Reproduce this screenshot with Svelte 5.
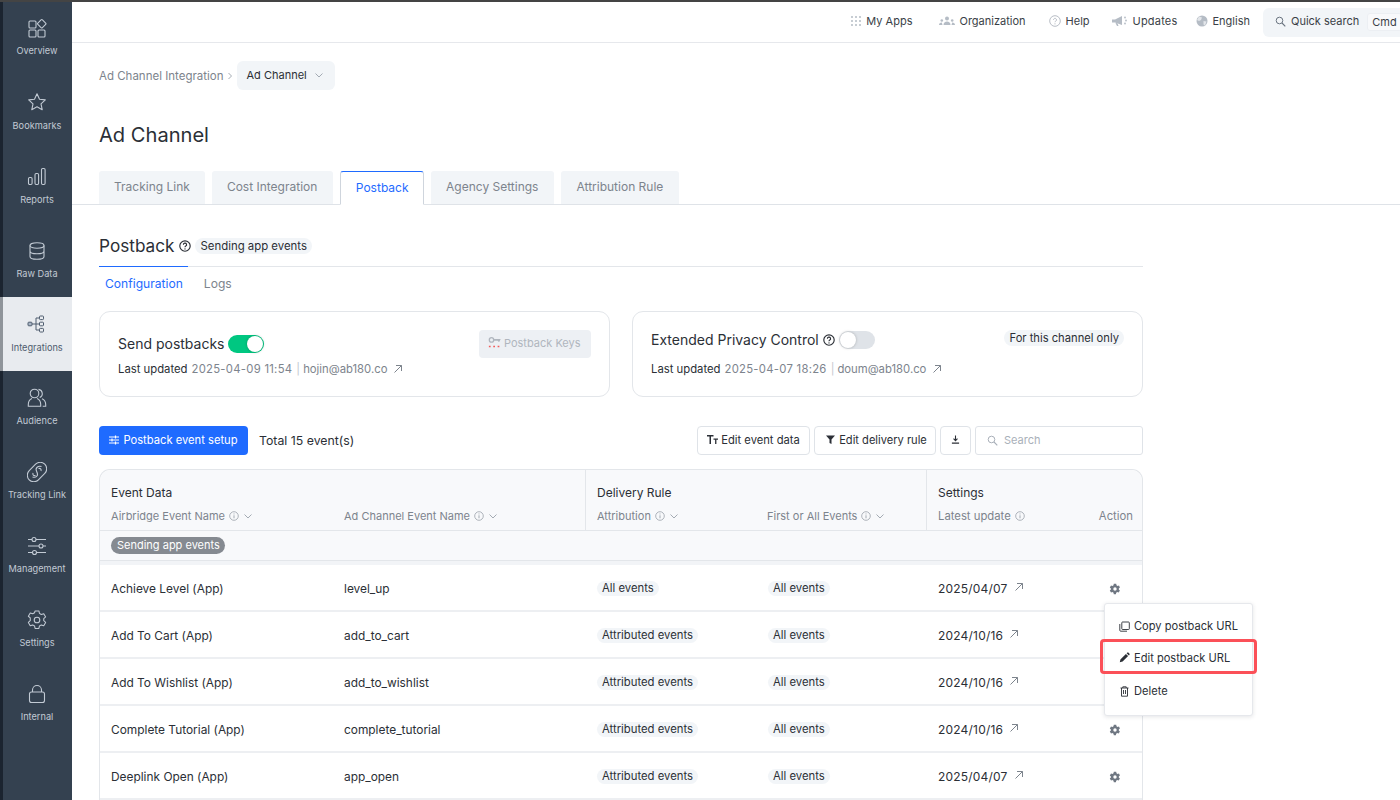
<script>
  const S = 'fill="none" stroke="currentColor" stroke-width="1.1"';
  const nav = [
    { label: 'Overview', svg: `<g ${S}><rect x="2" y="3" width="7" height="7" rx="1"/><rect x="2" y="12" width="7" height="7" rx="1"/><rect x="11" y="12" width="7" height="7" rx="1"/><rect x="11.500" y="2.500" width="6.500" height="6.500" rx="1" transform="rotate(45 14.750 5.750)"/></g>` },
    { label: 'Bookmarks', svg: `<path ${S} stroke-linejoin="round" d="M10 1.800l2.500 5.400 5.800.7-4.300 4 1.200 5.800L10 14.800l-5.200 2.900L6 11.900l-4.300-4 5.800-.7z"/>` },
    { label: 'Reports', svg: `<g ${S}><rect x="1.500" y="10.500" width="3.600" height="7" rx="1.200"/><rect x="8" y="6.500" width="3.600" height="11" rx="1.200"/><rect x="14.500" y="1.500" width="3.600" height="16" rx="1.200"/></g>` },
    { label: 'Raw Data', svg: `<g ${S}><ellipse cx="10" cy="4.500" rx="7" ry="2.700"/><path d="M3 4.500v11c0 1.600 3.100 2.800 7 2.800s7-1.200 7-2.800v-11M3 10c0 1.600 3.100 2.800 7 2.800s7-1.200 7-2.800"/></g>` },
    { label: 'Integrations', active: true, svg: `<g fill="none" stroke="#4e5c6e" stroke-width="1"><rect x="1" y="8.200" width="4" height="3.600" rx=".8" fill="#a9b6c6"/><path d="M5 10h4M9 4v12M9 4h3M9 10h3M9 16h3"/><rect x="12.500" y="2" width="4" height="3.600" rx=".8"/><rect x="12.500" y="8.200" width="4" height="3.600" rx=".8"/><rect x="12.500" y="14.400" width="4" height="3.600" rx=".8"/></g>` },
    { label: 'Audience', svg: `<g ${S}><circle cx="7.500" cy="5.500" r="4.300"/><path d="M5 10.600c-2 .8-3.700 3-3.700 6v1.700h12.400v-1.700c0-3-1.700-5.200-3.700-6"/><path d="M11.500 1.400a4.300 4.300 0 0 1 1.200 8.200M15 10.800c2 .8 3.700 3 3.700 5.800v1.700h-3"/></g>` },
    { label: 'Tracking Link', svg: `<g ${S}><rect x="-1" y="3.500" width="22" height="13" rx="6.500" transform="rotate(-45 10 10)"/><path d="M14.500 4.500C11 3.500 8 6 9.500 9c1 2 1.800 3.500.5 5-1 1.200-2.700 1.600-4.500 1"/><path d="M11.500 6.500c2-.5 3 .8 2.500 2.500M8.500 13.500c-2 .5-3-.8-2.500-2.500"/></g>` },
    { label: 'Management', svg: `<g ${S}><path d="M1 3.500h4M9 3.500h10M1 10h11M16 10h3M1 16.500h4.500M9.500 16.500H19"/><circle cx="7" cy="3.500" r="2"/><circle cx="14" cy="10" r="2"/><circle cx="7.500" cy="16.500" r="2"/></g>` },
    { label: 'Settings', svg: `<g ${S} stroke-linejoin="round"><path d="M8 1.500h4l.6 2.600 1.900 1.100 2.600-.8 2 3.400-2 1.800v2.200l2 1.800-2 3.400-2.600-.8-1.900 1.100-.6 2.600H8l-.6-2.600-1.900-1.100-2.600.8-2-3.400 2-1.800V8.900l-2-1.800 2-3.400 2.600.8 1.900-1.100z" transform="translate(.5 -.5) scale(.95)"/><circle cx="10" cy="10" r="2.800"/></g>` },
    { label: 'Internal', svg: `<g ${S}><rect x="2.500" y="8" width="15" height="10.500" rx="2"/><path d="M5.500 8V6a4.500 4.500 0 0 1 9 0v2"/></g>` },
  ];
  const tabs = ['Tracking Link', 'Cost Integration', 'Postback', 'Agency Settings', 'Attribution Rule'];
  const rows = [
    ['Achieve Level (App)', 'level_up', 'All events', 'All events', '2025/04/07', true],
    ['Add To Cart (App)', 'add_to_cart', 'Attributed events', 'All events', '2024/10/16', false],
    ['Add To Wishlist (App)', 'add_to_wishlist', 'Attributed events', 'All events', '2024/10/16', false],
    ['Complete Tutorial (App)', 'complete_tutorial', 'Attributed events', 'All events', '2024/10/16', true],
    ['Deeplink Open (App)', 'app_open', 'Attributed events', 'All events', '2025/04/07', true],
  ];
</script>

{#snippet help(size = 12)}
  <svg width={size} height={size} viewBox="0 0 12 12" class="help"><circle cx="6" cy="6" r="5.200" fill="none" stroke="currentColor" stroke-width="1.150"/><path d="M4.400 4.800a1.600 1.600 0 1 1 2.400 1.300c-.5.300-.8.600-.8 1.100" fill="none" stroke="currentColor" stroke-width="1.150"/><circle cx="6" cy="8.900" r=".7" fill="currentColor"/></svg>
{/snippet}
{#snippet info()}
  <svg width="10" height="10" viewBox="0 0 10 10" class="info"><circle cx="5" cy="5" r="4.300" fill="none" stroke="currentColor" stroke-width=".8"/><path d="M5 4.300v3M5 2.500v.9" stroke="currentColor" stroke-width=".9"/></svg>
{/snippet}
{#snippet chev()}
  <svg width="10" height="10" viewBox="0 0 10 10" class="chev"><path d="M1.500 3.500L5 7l3.500-3.500" fill="none" stroke="currentColor" stroke-width=".9"/></svg>
{/snippet}
{#snippet arrow()}
  <svg width="10" height="10" viewBox="0 0 10 10" class="arrow"><path d="M1.500 8.500L8.500 1.500M3 1.500h5.500V7" fill="none" stroke="currentColor" stroke-width="1"/></svg>
{/snippet}
{#snippet gear()}
  <svg width="12" height="12" viewBox="0 0 12 12" class="gear"><path fill-rule="evenodd" fill="currentColor" d="M4.800.8h2.400l.3 1.500 1 .6 1.500-.5L10.900 4.500 9.800 5.500v1l1.100 1-1.200 2.100-1.500-.5-1 .6-.3 1.500H4.800l-.3-1.500-1-.6-1.500.5L.8 7.500l1.100-1v-1L.8 4.500 2 2.400l1.500.5 1-.6zM6 4.300a1.700 1.700 0 1 0 0 3.400 1.700 1.700 0 0 0 0-3.400z"/></svg>
{/snippet}

<div class="shell">
  <aside class="side">
    {#each nav as n}
      <div class="nav" class:active={n.active}>
        <svg width="20" height="20" viewBox="0 0 20 20">{@html n.svg}</svg>
        <span>{n.label}</span>
      </div>
    {/each}
  </aside>

  <div class="main">
    <header class="top">
      <div class="top-item apps">
        <svg width="12" height="12" viewBox="0 0 12 12" fill="#b5bcc5"><circle cx="2" cy="2" r="1"/><circle cx="6" cy="2" r="1"/><circle cx="10" cy="2" r="1"/><circle cx="2" cy="6" r="1"/><circle cx="6" cy="6" r="1"/><circle cx="10" cy="6" r="1"/><circle cx="2" cy="10" r="1"/><circle cx="6" cy="10" r="1"/><circle cx="10" cy="10" r="1"/></svg>
        My Apps
      </div>
      <div class="top-item org">
        <svg width="16" height="12" viewBox="0 0 16 12" fill="#b5bcc5"><circle cx="8" cy="3.500" r="2"/><path d="M4.500 10c0-2 1.500-3.500 3.500-3.500S11.500 8 11.500 10z"/><circle cx="2.800" cy="5.500" r="1.300"/><circle cx="13.200" cy="5.500" r="1.300"/><path d="M0 10c0-1.500 1-2.500 2.800-2.500L3.500 10zM16 10c0-1.500-1-2.500-2.800-2.500L12.500 10z"/></svg>
        Organization
      </div>
      <div class="top-item hlp">
        <svg width="12" height="12" viewBox="0 0 12 12" class="gray"><circle cx="6" cy="6" r="5.300" fill="none" stroke="currentColor" stroke-width=".9"/><path d="M4.500 4.800a1.500 1.500 0 1 1 2.300 1.300c-.5.300-.8.600-.8 1.100" fill="none" stroke="currentColor" stroke-width=".9"/><circle cx="6" cy="8.800" r=".6" fill="currentColor"/></svg>
        Help
      </div>
      <div class="top-item upd">
        <svg width="16" height="12" viewBox="0 0 16 12" fill="#b5bcc5"><path d="M0 4.500h3L10 1v9L3 7.500H0zM3.500 8l1.500 3h1.500L5.500 8z"/><circle cx="13" cy="2.500" r=".9"/><circle cx="14" cy="5.500" r=".9"/><circle cx="13" cy="8.500" r=".9"/></svg>
        Updates
      </div>
      <div class="top-item eng">
        <svg width="12" height="12" viewBox="0 0 12 12"><circle cx="6" cy="6" r="5.500" fill="#b5bcc5"/><path d="M3 1.500l3 1-1 2.500-2 1-2-1M7.500 6l3 .5-1.500 4-1.500-1z" fill="#e3e6ea"/></svg>
        English
      </div>
      <div class="quick">
        <svg width="11" height="11" viewBox="0 0 11 11"><circle cx="4.500" cy="4.500" r="3.300" fill="none" stroke="#6a7480" stroke-width="1"/><path d="M7 7l3.300 3.300" stroke="#6a7480" stroke-width="1.100"/></svg>
        <span>Quick search</span>
        <span class="cmd">Cmd</span>
      </div>
    </header>

    <div class="crumbs">
      <span class="crumb">Ad Channel Integration</span>
      <svg width="8" height="8" viewBox="0 0 8 8" class="crumb-sep"><path d="M2.500 1L5.500 4 2.500 7" fill="none" stroke="currentColor" stroke-width=".9"/></svg>
      <div class="crumb-select">Ad Channel {@render chev()}</div>
    </div>

    <h1>Ad Channel</h1>

    <nav class="tabs">
      {#each tabs as t}
        <div class="tab" class:on={t === 'Postback'}>{t}</div>
      {/each}
    </nav>

    <section class="panel">
      <div class="title-row">
        <h2>Postback</h2>
        {@render help(12)}
        <span class="pill">Sending app events</span>
      </div>
      <div class="subtabs">
        <span class="sub on">Configuration</span>
        <span class="sub">Logs</span>
      </div>

      <div class="cards">
        <div class="card one">
          <div class="card-head">
            <div class="card-title">Send postbacks <span class="toggle yes"><i></i></span></div>
            <div class="keys">
              <svg width="14" height="13" viewBox="0 0 16 14"><circle cx="4" cy="4" r="2.500" fill="none" stroke="#b0b6be" stroke-width="1.500"/><path d="M6.500 3h8l-1.500 3h-1L11 5H6.500z" fill="#b0b6be"/><path d="M1 11.500h2M6 11.500h2M11 11.500h2" stroke="#f25c5c" stroke-width="1.800"/></svg>
              Postback Keys
            </div>
          </div>
          <div class="meta"><b>Last updated</b> <span class="stamp">2025-04-09 11:54</span> <em>|</em> hojin@ab180.co {@render arrow()}</div>
        </div>
        <div class="card two">
          <div class="card-head">
            <div class="card-title">Extended Privacy Control {@render help(12)} <span class="toggle"><i></i></span></div>
            <span class="pill">For this channel only</span>
          </div>
          <div class="meta"><b>Last updated</b> <span class="stamp">2025-04-07 18:26</span> <em>|</em> doum@ab180.co {@render arrow()}</div>
        </div>
      </div>

      <div class="toolbar">
        <button class="primary">
          <svg width="10" height="10" viewBox="0 0 10 10"><path d="M0 2h10M0 5h10M0 8h10" stroke="#fff" stroke-width="1"/><path d="M6.500 .5v3M3 3.500v3M6.500 6.500v3" stroke="#fff" stroke-width="1.200"/></svg>
          Postback event setup
        </button>
        <span class="total">Total 15 event(s)</span>
        <span class="spacer"></span>
        <button class="ghost w1"><svg width="11" height="9" viewBox="0 0 11 9" fill="#2b2f36"><path d="M0 0h6.500v1.500H4V9H2.500V1.500H0zM6.500 3.500H11v1.200H9.400V9H8.100V4.700H6.500z"/></svg> Edit event data</button>
        <button class="ghost w2"><svg width="9" height="9" viewBox="0 0 9 9" fill="#2b2f36"><path d="M0 .5h9L5.500 4.500V9l-2-1V4.500z"/></svg> Edit delivery rule</button>
        <button class="ghost icon"><svg width="9" height="9" viewBox="0 0 10 10"><path d="M5 .5v5.500M2.800 4L5 6.300 7.200 4M1 9h8" fill="none" stroke="#2b2f36" stroke-width="1.200"/></svg></button>
        <div class="search">
          <svg width="11" height="11" viewBox="0 0 11 11"><circle cx="4.500" cy="4.500" r="3.300" fill="none" stroke="#a9b0b9" stroke-width="1"/><path d="M7 7l3.300 3.300" stroke="#a9b0b9" stroke-width="1.100"/></svg>
          Search
        </div>
      </div>

      <div class="table">
        <div class="thead">
          <div class="group g1">
            <div class="gname">Event Data</div>
            <div class="cols">
              <span class="c1">Airbridge Event Name {@render info()} {@render chev()}</span>
              <span>Ad Channel Event Name {@render info()} {@render chev()}</span>
            </div>
          </div>
          <div class="group g2">
            <div class="gname">Delivery Rule</div>
            <div class="cols">
              <span class="c3">Attribution {@render info()} {@render chev()}</span>
              <span>First or All Events {@render info()} {@render chev()}</span>
            </div>
          </div>
          <div class="group g3">
            <div class="gname">Settings</div>
            <div class="cols between">
              <span>Latest update {@render info()}</span>
              <span>Action</span>
            </div>
          </div>
        </div>
        <div class="band"><span class="tagdark">Sending app events</span></div>
        <div class="gapbar"></div>
        {#each rows as r}
          <div class="row">
            <span class="td name">{r[0]}</span>
            <span class="td chan">{r[1]}</span>
            <span class="td attr"><span class="chip">{r[2]}</span></span>
            <span class="td first"><span class="chip">{r[3]}</span></span>
            <span class="td date">{r[4]} {@render arrow()}</span>
            <span class="td act">{#if r[5]}{@render gear()}{/if}</span>
          </div>
        {/each}

        <div class="menu">
          <div class="mi">
            <svg width="11" height="11" viewBox="0 0 11 11" fill="none" stroke="#2b2f36" stroke-width=".9"><rect x="2.800" y="1" width="7.500" height="7.500" rx=".8"/><path d="M.8 3v6.300q0 .9.900.9H8"/></svg>
            Copy postback URL
          </div>
          <div class="mi hl">
            <svg width="11" height="11" viewBox="0 0 11 11" fill="#2b2f36"><path d="M.8 10.200l.6-2.800 5.500-5.500 2.200 2.200-5.500 5.500zM7.600 1.200l.8-.6q.5-.3.900 0l1.200 1.200q.3.400 0 .9l-.6.800z"/></svg>
            Edit postback URL
          </div>
          <div class="mi">
            <svg width="11" height="11" viewBox="0 0 11 11" fill="none" stroke="#2b2f36" stroke-width=".9"><path d="M1.500 2h8M3.800 2V.8h3.400V2M2.500 2v8.200h6V2M4.500 4v4M6.500 4v4"/></svg>
            Delete
          </div>
          <div class="redbox"></div>
        </div>
      </div>
    </section>
  </div>
</div>

<style>
  :global(body) { margin: 0; background: #fff; font-family: Inter, "Noto Sans", sans-serif; color: #2b2f36; overflow: hidden; }
  svg { flex: none; }
  .shell { display: flex; width: 1400px; height: 800px; overflow: hidden; position: relative; border-top: 2px solid #444; box-sizing: border-box; }
  .side { width: 69px; flex: none; background: #344150; border-left: 3px solid #1b2430; display: flex; flex-direction: column; }
  .nav { height: 74px; flex: none; display: flex; flex-direction: column; align-items: center; padding: 17px 1px 0 0; box-sizing: border-box; gap: 6px; color: #c2cad4; font-size: 9.200px; line-height: 14px; white-space: nowrap; }
  .nav:first-child { height: 73px; padding-top: 16px; }
  .nav:nth-child(2), .nav:nth-child(5) { gap: 7px; }
  .nav:nth-child(3), .nav:nth-child(4) { padding-top: 18px; }
  .nav svg { display: block; }
  .nav.active { background: #e8ebef; color: #4e5c6e; box-shadow: -3px 0 0 #8f949a; }
  .main { flex: 1; min-width: 0; display: flex; flex-direction: column; }
  .top { height: 41px; flex: none; border-bottom: 1px solid #e6e8ec; display: flex; justify-content: flex-end; align-items: center; box-sizing: border-box; padding-bottom: 2px; font-size: 11px; color: #3a3f47; width: 1328px; overflow: hidden; }
  .top-item { display: flex; align-items: center; gap: 5px; white-space: nowrap; }
  .top-item.apps { gap: 4px; margin-right: 27px; }
  .top-item.org { gap: 4px; margin-right: 23px; }
  .top-item.hlp { margin-right: 22px; }
  .top-item.upd { margin-right: 18px; letter-spacing: .2px; }
  .top-item.eng { margin-right: 13px; }
  .top-item .gray { color: #b0b6be; }
  .quick { display: flex; align-items: center; gap: 5px; background: #f2f5f8; height: 29px; width: 137px; flex: none; align-self: flex-start; margin-top: 6px; border-radius: 6px 0 0 6px; padding: 0 0 3px 12px; box-sizing: border-box; white-space: nowrap; overflow: hidden; }
  .cmd { border: 1px solid #eceff3; background: #f8f9fb; border-radius: 3px; padding: 0 4px; line-height: 16px; margin: 2px 0 0 3px; }

  .crumbs { display: flex; align-items: center; margin: 18px 0 0 27px; height: 29px; font-size: 11px; }
  .crumb { color: #7d848d; font-size: 11.500px; }
  .crumb-sep { color: #9aa1aa; margin: 0 2px 0 2px; }
  .crumb-select { display: flex; align-items: center; gap: 7px; height: 29px; background: #f2f5f8; border-radius: 6px; padding: 0 11px 2px 10px; box-sizing: border-box; margin-left: 1px; }
  .chev { color: #9aa1aa; flex: none; }
  h1 { margin: 31px 0 0 27px; font-size: 20.100px; line-height: 28px; font-weight: 400; color: #2b2f36; }
  .tabs { display: flex; gap: 7px; margin-top: 22px; padding-left: 27px; height: 33px; border-bottom: 1px solid #dfe3e8; box-sizing: content-box; }
  .tab { background: #f2f5f8; color: #7d848d; font-size: 12px; padding: 0 15px; height: 33px; line-height: 32px; border-radius: 3px 3px 0 0; border-bottom: 1px solid #dfe3e8; box-sizing: content-box; }
  .tab:nth-child(2), .tab:nth-child(4), .tab:nth-child(5) { padding-right: 16px; }
  .tab.on { background: #fff; color: #1f6bff; border: 1px solid #cfd5dd; border-top: 1px solid #1f6bff; border-bottom: 1px solid #fff; height: 32px; padding: 0 14.500px; }

  .panel { width: 1044px; margin-left: 27px; position: relative; }
  .title-row { display: flex; align-items: center; height: 62px; box-sizing: border-box; padding-top: 20px; border-bottom: 1px solid #e3e6ea; position: relative; gap: 4px; }
  .title-row::after { content: ""; position: absolute; left: 0; bottom: -1px; width: 89px; height: 1px; background: #1f6bff; }
  h2 { margin: 0 1px 0 0; font-size: 17.200px; font-weight: 400; line-height: 24px; }
  .help { color: #2b2f36; flex: none; }
  .pill { background: #f2f5f8; border-radius: 9px; font-size: 11.200px; line-height: 16px; padding: 0 5px; white-space: nowrap; }
  .title-row .pill { font-size: 11.400px; }
  .subtabs { display: flex; gap: 21px; padding: 9px 0 0 6px; height: 34px; box-sizing: border-box; font-size: 12.100px; line-height: 16px; color: #7d848d; }
  .sub.on { color: #1f6bff; }

  .cards { display: flex; gap: 22px; margin-top: 10px; }
  .card { width: 511px; height: 86px; flex: none; border: 1px solid #e3e6ea; border-radius: 11px; box-sizing: border-box; padding: 0 18px; position: relative; }
  .card-head { display: flex; align-items: center; justify-content: space-between; box-sizing: border-box; }
  .one .card-head { height: 49px; padding-top: 14px; }
  .two .card-head { height: 38px; padding-top: 12px; margin-bottom: 11px; }
  .two .card-title { margin-top: 6px; }
  .two .pill { margin-top: 2px; }
  .card-title { display: flex; align-items: center; gap: 4px; font-size: 14px; line-height: 20px; }
  .one .card-title { gap: 3px; }
  .toggle { width: 36px; height: 18px; border-radius: 9px; background: #dfe3e8; position: relative; display: inline-block; }
  .toggle i { position: absolute; left: 1px; top: 1px; width: 16px; height: 16px; border-radius: 50%; background: #fff; box-shadow: 0 0 3px rgba(0,0,0,.25); }
  .toggle.yes { background: #00c781; }
  .toggle.yes i { left: 19px; }
  .keys { display: flex; align-items: center; gap: 2px; width: 112px; height: 28px; background: #edf0f4; border-radius: 4px; color: #b0b6be; font-size: 11px; padding: 0 0 2px 9px; box-sizing: border-box; white-space: nowrap; flex: none; }
  .meta { font-size: 11.300px; line-height: 16px; color: #7d848d; white-space: nowrap; display: flex; align-items: center; gap: 4px; }
  .stamp { letter-spacing: .27px; }
  .meta b { font-weight: 400; color: #2b2f36; }
  .meta em { font-style: normal; color: #c4c9cf; margin-right: -1px; }
  .arrow { color: #7d848d; flex: none; margin-left: 2px; }

  .toolbar { display: flex; align-items: center; margin-top: 29px; height: 29px; }
  button { font: inherit; font-size: 11.200px; display: flex; align-items: center; justify-content: center; cursor: pointer; height: 29px; box-sizing: border-box; white-space: nowrap; padding-bottom: 2px; }
  .primary { background: #1f6bff; color: #fff; border: 0; border-radius: 4px; width: 149px; gap: 4px; padding-left: 6px; }
  .total { font-size: 12.300px; margin-left: 11px; padding-bottom: 1px; }
  .spacer { flex: 1; }
  .ghost { background: #fff; border: 1px solid #dfe3e8; border-radius: 4px; color: #2b2f36; gap: 4px; padding: 0 0 2px; margin-right: 4px; flex: none; }
  .ghost.w1 { width: 113px; gap: 3px; }
  .ghost.w2 { width: 122px; padding-left: 3px; font-size: 11.100px; }
  .ghost.icon { width: 31px; }
  .search { width: 168px; height: 29px; border: 1px solid #dfe3e8; border-radius: 3px; box-sizing: border-box; display: flex; align-items: center; gap: 6px; padding: 0 0 1px 11px; font-size: 11px; color: #a9b0b9; }

  .table { margin-top: 14px; border: 1px solid #e3e6ea; border-bottom: 0; border-radius: 11px 11px 0 0; position: relative; width: 1044px; box-sizing: border-box; }
  .thead { display: flex; height: 61px; background: #f8f9fb; border-bottom: 1px solid #e3e6ea; border-radius: 11px 11px 0 0; box-sizing: border-box; }
  .group { padding: 15px 11px 0; box-sizing: border-box; height: 60px; }
  .g1 { width: 485px; }
  .g2 { width: 341px; border-left: 1px solid #e3e6ea; }
  .g3 { flex: 1; border-left: 1px solid #e3e6ea; padding-right: 9px; }
  .gname { font-size: 12px; line-height: 16px; }
  .cols { display: flex; font-size: 11px; line-height: 14px; color: #7d848d; margin-top: 8px; white-space: nowrap; }
  .cols span { display: flex; align-items: center; gap: 4px; }
  .cols .c1 { width: 233px; flex: none; }
  .cols .c3 { width: 170px; flex: none; }
  .cols.between { justify-content: space-between; font-size: 11.300px; }
  .info { color: #9aa1aa; flex: none; }
  .band { height: 30px; background: #f8f9fb; display: flex; align-items: center; padding-left: 11px; border-bottom: 1px solid #e3e6ea; box-sizing: border-box; }
  .tagdark { background: #858a91; color: #fff; border-radius: 9px; font-size: 11px; line-height: 17px; padding: 0 5px 0 6px; }
  .gapbar { height: 4px; background: #f2f4f7; }
  .row { display: flex; align-items: center; height: 47px; box-sizing: border-box; border-bottom: 2px solid #edeff2; padding-top: 2px; font-size: 11.900px; white-space: nowrap; }
  .td { flex: none; box-sizing: border-box; display: flex; align-items: center; }
  .name { width: 244px; padding-left: 11px; }
  .chan { width: 242px; padding-left: 0; }
  .attr { width: 171px; padding-left: 11px; }
  .first { width: 170px; padding-left: 11px; }
  .date { width: 140px; padding-left: 11px; gap: 4px; letter-spacing: .2px; font-size: 12px; }
  .date .arrow { margin-bottom: 3px; }
  .act { flex: 1; justify-content: flex-end; padding-right: 21px; }
  .chip { background: #f2f5f8; border-radius: 8px; font-size: 11.300px; line-height: 15px; padding: 0 5px; }
  .gear { color: #6f7782; }

  .menu { position: absolute; left: 1004px; top: 133px; width: 149px; height: 113px; background: #fff; border: 1px solid #e6e8ec; border-radius: 3px; box-shadow: 0 1px 4px rgba(30,40,60,.12); box-sizing: border-box; padding-top: 6px; z-index: 3; font-size: 11.100px; }
  .mi { height: 32.500px; display: flex; align-items: center; gap: 4px; padding-left: 14px; }
  .mi.hl { margin: -1px 0 1px; }
  .redbox { position: absolute; left: -5px; top: 35px; width: 157px; height: 35px; border: 3px solid #fb5058; border-radius: 4px; box-sizing: border-box; pointer-events: none; }
</style>
